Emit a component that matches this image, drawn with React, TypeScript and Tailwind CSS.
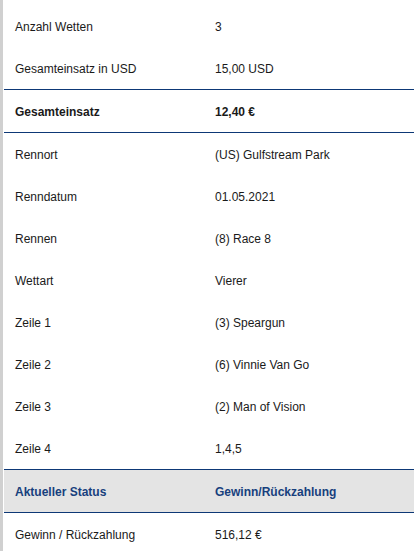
const rows: { label: string; value: string; kind?: 'bold' | 'status' }[] = [
  { label: 'Anzahl Wetten', value: '3' },
  { label: 'Gesamteinsatz in USD', value: '15,00 USD' },
  { label: 'Gesamteinsatz', value: '12,40 €', kind: 'bold' },
  { label: 'Rennort', value: '(US) Gulfstream Park' },
  { label: 'Renndatum', value: '01.05.2021' },
  { label: 'Rennen', value: '(8) Race 8' },
  { label: 'Wettart', value: 'Vierer' },
  { label: 'Zeile 1', value: '(3) Speargun' },
  { label: 'Zeile 2', value: '(6) Vinnie Van Go' },
  { label: 'Zeile 3', value: '(2) Man of Vision' },
  { label: 'Zeile 4', value: '1,4,5' },
  { label: 'Aktueller Status', value: 'Gewinn/Rückzahlung', kind: 'status' },
  { label: 'Gewinn / Rückzahlung', value: '516,12 €' },
];

export default function App() {
  return (
    <div className="flex min-h-[551px] w-[414px] bg-white font-['Liberation_Sans',Arial,sans-serif] text-[12px] text-[#1a1a1a]">
      <div className="w-[3px] shrink-0 bg-[#d0d0d0]" />
      <div className="ml-[1px] flex-1 pt-[5px]">
        {rows.map((r, i) => {
          const next = rows[i + 1];
          const lined = r.kind || next?.kind;
          return (
            <div
              key={r.label}
              className={`box-content grid h-[40px] grid-cols-[200px_1fr] items-center pt-[2px] ${
                lined ? 'border-b border-[#0d3876]' : ''
              } ${r.kind === 'status' ? 'bg-[#e4e4e4] font-bold text-[#173f7d]' : ''} ${
                r.kind === 'bold' ? 'font-bold' : ''
              }`}
            >
              <span className="pl-[11px]">{r.label}</span>
              <span className="pl-[11px]">{r.value}</span>
            </div>
          );
        })}
      </div>
    </div>
  );
}
